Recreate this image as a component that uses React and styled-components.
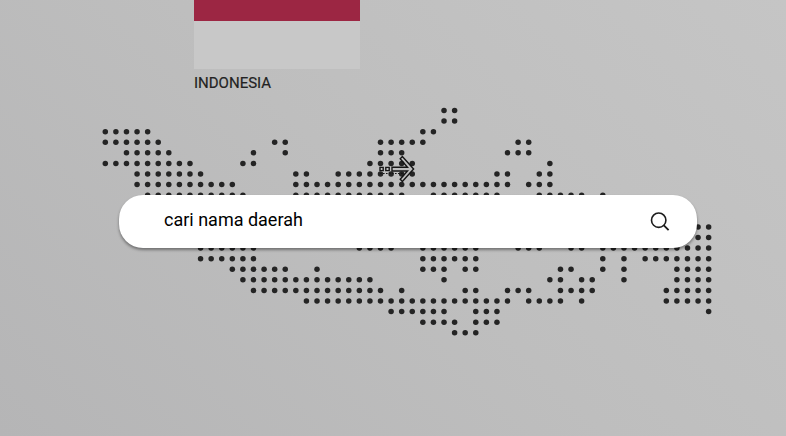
import React from "react";
import styled, { createGlobalStyle } from "styled-components";

const GlobalStyle = createGlobalStyle`
  * {
    box-sizing: border-box;
  }

  body {
    margin: 0;
    font-family: Roboto, "Liberation Sans", sans-serif;
    color: #232323;
  }
`;

const Page = styled.main`
  min-height: 100vh;
  padding: 0 74px 0 102px;
  background: linear-gradient(45deg, #b5b5b6 0%, #bebebe 50%, #c5c5c5 100%);
`;

const Country = styled.figure`
  width: 166px;
  margin: 0 0 13px 92px;
`;

const Flag = styled.div`
  display: grid;
  grid-template-rows: 21px 48px;
`;

const Stripe = styled.div`
  background: ${({ $color }) => $color};
`;

const CountryName = styled.figcaption`
  padding-top: 4px;
  font-size: 15px;
  font-weight: 400;
  line-height: 21px;
  -webkit-text-stroke: 0.2px currentColor;
`;

const Explorer = styled.section`
  display: grid;
  align-items: center;

  > * {
    grid-area: 1 / 1;
  }
`;

const MapDrawing = styled.svg`
  display: block;
  width: 100%;
  height: auto;
`;

const SearchBar = styled.form`
  display: flex;
  align-items: center;
  height: 53px;
  margin: 0 15px 0 17px;
  padding: 0 27px 0 45px;
  border-radius: 24px;
  background: #fff;
  box-shadow: 0 2px 3px rgba(0, 0, 0, 0.4);
`;

const SearchInput = styled.input`
  flex: 1;
  min-width: 0;
  padding: 0 0 4px;
  border: 0;
  outline: 0;
  background: transparent;
  color: #000;
  font: 400 18px/24px Roboto, "Liberation Sans", sans-serif;

  &::placeholder {
    color: #000;
    opacity: 1;
  }
`;

const SearchButton = styled.button`
  display: flex;
  padding: 0;
  border: 0;
  background: transparent;
  color: #1c1c1c;
  cursor: pointer;
`;

// Each row lists inclusive [first, last] column runs of the dotted map.
const MAP_ROWS = [
  [[32, 33]],
  [[32, 33]],
  [[0, 4], [30, 31]],
  [[0, 5], [16, 17], [26, 30], [39, 40]],
  [[2, 6], [14, 14], [17, 17], [26, 28], [38, 40]],
  [[0, 8], [13, 14], [25, 29], [42, 42]],
  [[3, 9], [18, 19], [22, 29], [37, 38], [41, 42]],
  [[3, 12], [18, 38], [40, 42]],
  [[4, 13], [18, 28], [31, 37], [41, 45], [47, 47]],
  [[6, 13], [18, 28], [31, 35], [41, 45], [47, 50]],
  [[7, 14], [19, 28], [31, 35], [41, 45], [47, 54]],
  [[8, 14], [20, 28], [30, 35], [42, 45], [48, 57]],
  [[8, 14], [22, 28], [30, 35], [42, 45], [48, 57]],
  [[9, 14], [24, 27], [30, 35], [39, 41], [44, 45], [47, 57]],
  [[9, 14], [30, 35], [47, 47], [49, 49], [51, 57]],
  [[12, 17], [20, 20], [30, 32], [34, 35], [43, 44], [47, 47], [49, 49], [54, 57]],
  [[13, 25], [32, 32], [42, 43], [45, 46], [49, 49], [54, 57]],
  [[14, 26], [28, 28], [34, 35], [38, 40], [43, 46], [53, 57]],
  [[19, 38], [40, 43], [45, 45], [53, 57]],
  [[27, 32], [35, 37], [57, 57]],
  [[30, 33], [35, 37]],
  [[33, 35]],
];

const PITCH = 10.585;

const DOTS = MAP_ROWS.flatMap((runs, row) =>
  runs.flatMap(([first, last]) =>
    Array.from({ length: last - first + 1 }, (_, i) => ({
      key: `${row}-${first + i}`,
      x: 3.3 + (first + i) * PITCH,
      y: 3.5 + row * PITCH,
    }))
  )
);

function DottedMap() {
  return (
    <MapDrawing viewBox="0 0 610 229" role="img" aria-label="Peta Indonesia">
      <g fill="#242424">
        {DOTS.map(({ key, x, y }) => (
          <circle key={key} cx={x} cy={y} r="2.75" />
        ))}
      </g>
      <g fill="#bdbdbd" fillOpacity="0.3" stroke="#151515" strokeWidth="1.4">
        <path d="M278 60.4h3.2v3.2h-3.2zM283.8 60.4h3.4v3.2h-3.4z" />
        <path d="M290 60.2h15.5l-7.3-8.4 2.2-2.3 11.2 12.5-11.2 12.5-2.2-2.3 7.3-8.2H290z" />
        <path d="M278 66.5h24" strokeDasharray="1.6 1.4" strokeWidth="1" fill="none" />
      </g>
    </MapDrawing>
  );
}

function SearchIcon() {
  return (
    <svg width="20" height="20" viewBox="0 0 20 20" fill="none" stroke="currentColor" strokeWidth="1.6" aria-hidden="true">
      <circle cx="8.7" cy="8.2" r="7.2" />
      <path d="M13.6 13.2l5 5" strokeWidth="1.9" />
    </svg>
  );
}

export default function App() {
  return (
    <>
      <GlobalStyle />
      <Page>
        <Country>
          <Flag role="img" aria-label="Bendera Indonesia">
            <Stripe $color="#9c2643" />
            <Stripe $color="#c8c8c8" />
          </Flag>
          <CountryName>INDONESIA</CountryName>
        </Country>
        <Explorer>
          <DottedMap />
          <SearchBar role="search" onSubmit={(event) => event.preventDefault()}>
            <SearchInput type="text" aria-label="cari nama daerah" placeholder="cari nama daerah" />
            <SearchButton type="submit" aria-label="Cari">
              <SearchIcon />
            </SearchButton>
          </SearchBar>
        </Explorer>
      </Page>
    </>
  );
}
